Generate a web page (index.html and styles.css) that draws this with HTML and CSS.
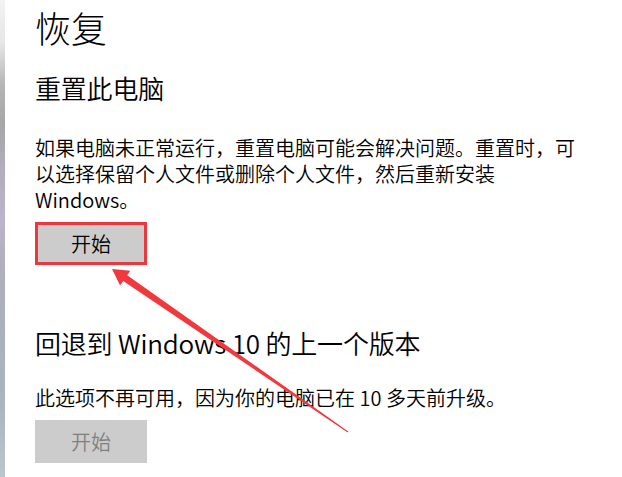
FILE: index.html
```html
<!DOCTYPE html>
<html lang="zh-CN">
<head>
<meta charset="utf-8">
<title>恢复</title>
<link rel="stylesheet" href="styles.css">
</head>
<body>
<div class="page">
  <div class="edge"></div>
  <main class="content">
    <h1 class="title">恢复</h1>
    <h2 class="section-title first">重置此电脑</h2>
    <p class="desc">如果电脑未正常运行，重置电脑可能会解决问题。重置时，可以选择保留个人文件或删除个人文件，然后重新安装 Windows。</p>
    <button class="btn btn-highlight" type="button">开始</button>
    <h2 class="section-title second">回退到 Windows 10 的上一个版本</h2>
    <p class="desc desc-second">此选项不再可用，因为你的电脑已在 10 多天前升级。</p>
    <button class="btn btn-disabled" type="button" disabled>开始</button>
  </main>
  <svg class="arrow" width="622" height="477" viewBox="0 0 622 477" aria-hidden="true">
    <polygon points="112,269 120.1,285.5 123.2,281 347.7,432.5 348.3,431.5 127.2,275.2 130.3,270.7" fill="#f0393e"/>
  </svg>
</div>
</body>
</html>
```

FILE: styles.css
```css
html, body {
  margin: 0;
  padding: 0;
  background: #ffffff;
}

body {
  font-family: "Noto Sans CJK SC", "Noto Sans", sans-serif;
  color: #000000;
  width: 622px;
  height: 477px;
  overflow: hidden;
}

.page {
  position: relative;
  display: flex;
  width: 622px;
  height: 477px;
}

.edge {
  width: 5px;
  flex: 0 0 5px;
  background: linear-gradient(to bottom,
    #f3f3f3 0%,
    #e6e6e6 9%,
    #b4b4b4 18%,
    #a6a6a6 26%,
    #b2aebb 36%,
    #bcb4cb 46%,
    #b0afbd 56%,
    #a9b1bc 70%,
    #aab5bf 85%,
    #bcc6cc 100%);
}

.content {
  padding-left: 30px;
  display: flex;
  flex-direction: column;
  align-items: flex-start;
}

.title {
  margin: 3px 0 0;
  font-size: 36px;
  line-height: 48px;
  font-weight: 300;
}

.section-title {
  margin: 0;
  font-size: 26px;
  line-height: 36px;
  font-weight: 350;
  letter-spacing: -0.2px;
}

.section-title.first {
  margin-top: 19px;
}

.section-title.second {
  margin-top: 59.5px;
}

.desc {
  margin: 28.5px 0 0;
  width: 548px;
  font-size: 20px;
  line-height: 26px;
  font-weight: 350;
}

.desc.desc-second {
  margin-top: 24px;
}

.btn {
  margin-top: 9.5px;
  box-sizing: border-box;
  width: 112px;
  height: 43px;
  padding: 0;
  background: #cccccc;
  border: none;
  font-family: "Noto Sans CJK SC", "Noto Sans", sans-serif;
  font-size: 20px;
  font-weight: 350;
  line-height: 1;
  color: #000000;
}

.btn-highlight {
  border: 3px solid #e8393f;
}

.btn-disabled {
  color: #808080;
}

.arrow {
  position: absolute;
  left: 0;
  top: 0;
  pointer-events: none;
}
```
